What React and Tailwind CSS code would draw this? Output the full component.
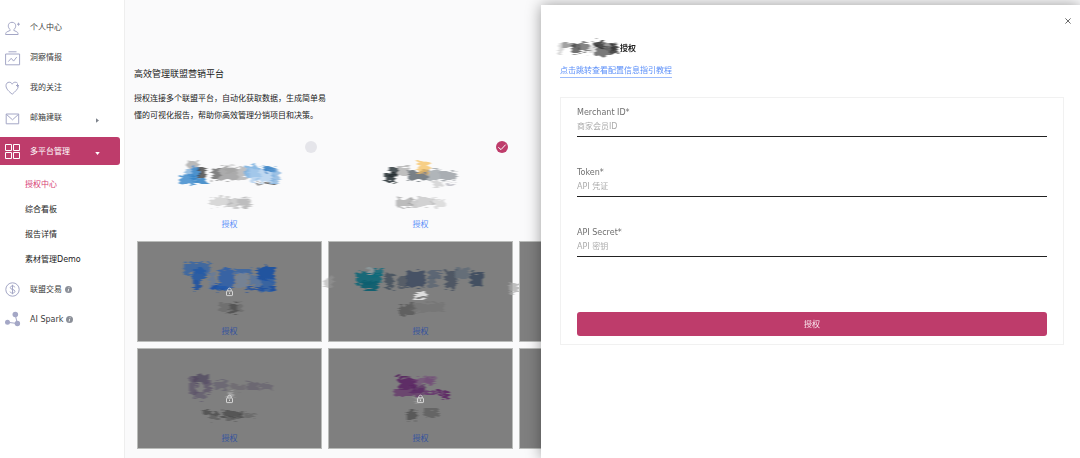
import React from "react";

const navTop = [
  { label: "个人中心", icon: "user" },
  { label: "洞察情报", icon: "insight" },
  { label: "我的关注", icon: "heart" },
  { label: "邮箱建联", icon: "mail", arrow: true },
];
const subItems = ["授权中心", "综合看板", "报告详情", "素材管理Demo"];
const navBottom = [
  { label: "联盟交易", icon: "dollar" },
  { label: "AI Spark", icon: "spark" },
];

function NavIcon({ name }) {
  const shapes = {
    user: (
      <>
        <path d="M5.2 8.6C3.7 7.6 3.3 6 3.3 4.8 3.3 2.600 4.900 1.300 7 1.300s3.700 1.300 3.700 3.500c0 1.200-.4 2.800-1.900 3.800v.8l3 1.400c.9.5 1.300 1.200 1.300 2.700H.6c0-1.500.5-2.200 1.500-2.700l3.100-1.400z" />
        <path d="M13.500 1.700v3M12 3.200h3" />
      </>
    ),
    insight: (
      <>
        <path d="M3.500 .8h8M.6 3h14v10.800H.6z" />
        <path d="M3.300 10.600 6.200 7.300l2.400 2.800 3.100-4" />
      </>
    ),
    heart: (
      <>
        <path d="M13.400 5.300c-.3 2.700-3.400 5.500-6.200 7.900C4.200 10.700 1 8 1 4.700 1 2.600 2.400 1.200 4.200 1.200c1.300 0 2.400.7 3 2 .6-1.300 1.700-2 3-2 1.100 0 2 .5 2.500 1.200" />
        <path d="M12.500 3v3M11 4.500h3" />
      </>
    ),
    mail: (
      <>
        <path d="M1.200 3h12.500v9.800H1.200z" />
        <path d="m1.200 3.200 6.300 5.600 6.200-5.600" />
      </>
    ),
    grid: <path d="M.5.5h6v6h-6zM8.500.5h6v6h-6zM.5 8.500h6v6h-6zM8.500 8.500h6v6h-6z" />,
    dollar: (
      <>
        <circle cx="7.500" cy="7.500" r="6.700" />
        <path d="M7.500 2.800v9.400M9.800 5.300C9.600 4.400 8.700 4 7.500 4S5.300 4.500 5.300 5.600c0 2.500 4.600 1.200 4.600 3.800 0 1.100-1.100 1.700-2.400 1.700s-2.300-.5-2.500-1.500" />
      </>
    ),
    spark: (
      <>
        <path d="m10.300 3 2 8.500-9.500-1.200" />
        <g fill="currentColor" stroke="none">
          <circle cx="10.300" cy="2.500" r="2.800" />
          <circle cx="12.400" cy="11.500" r="2.700" />
          <circle cx="2.500" cy="10.200" r="2.500" />
        </g>
      </>
    ),
  };
  return (
    <svg viewBox="0 0 15 15" fill="none" stroke="currentColor" strokeWidth="1" className="size-[15px] shrink-0 overflow-visible" aria-hidden="true">
      {shapes[name]}
    </svg>
  );
}

function InfoDot() {
  return (
    <svg viewBox="0 0 8 8" className="-ml-[7px] size-[7px] shrink-0" aria-hidden="true">
      <circle cx="4" cy="4" r="4" fill="#8b8f98" />
      <path d="M4.600 1.500v.9M4.200 3.300 3.600 6.300" stroke="#fff" strokeWidth="1" />
    </svg>
  );
}

function Sidebar() {
  const row = "flex h-[30px] items-center gap-2.5 pl-[5px] text-[#a4a7c6]";
  return (
    <nav className="w-[125px] shrink-0 border-r border-[#eeeeee] bg-white pt-[13px]">
      {navTop.map((item) => (
        <a key={item.label} href="#" className={row}>
          <NavIcon name={item.icon} />
          <span className="text-[#3c3c3c]">{item.label}</span>
          {item.arrow && (
            <svg viewBox="0 0 4 6" className="mt-1 mr-[25px] ml-auto h-[5px] w-[3px]" aria-hidden="true">
              <path d="M0 0l4 3-4 3z" fill="#7d838c" />
            </svg>
          )}
        </a>
      ))}
      <a href="#" className="mt-1 mr-1 flex h-7 items-center gap-2.5 rounded-r-[3px] bg-[#be3c6b] pl-[5px] text-white">
        <NavIcon name="grid" />
        <span className="pt-0.5">多平台管理</span>
        <svg viewBox="0 0 6 4" className="mt-1 mr-5 ml-auto h-[3px] w-[5px]" aria-hidden="true">
          <path d="M0 0h6L3 4z" fill="#fff" />
        </svg>
      </a>
      <div className="pt-[7px] pb-0.5">
        {subItems.map((label, i) => (
          <a key={label} href="#" className={"flex h-[25px] items-center pl-[25px] " + (i === 0 ? "text-[#d63d75]" : "text-[#1c1c1c]")}>
            {label}
          </a>
        ))}
      </div>
      {navBottom.map((item) => (
        <a key={item.label} href="#" className={row}>
          <NavIcon name={item.icon} />
          <span className="pt-0.5 text-[#3c3c3c]">{item.label}</span>
          <InfoDot />
        </a>
      ))}
    </nav>
  );
}

/* Each stroke: [x, y, width, height, colour, opacity] */
const cards = [
  {
    id: "a",
    strokes: [
      [50, 26, 11, 9, "#777", 0.5], [49, 34, 13, 10, "#7fb0dc", 0.8], [43, 41, 15, 9, "#3f8ccc", 0.85],
      [55, 34, 7, 13, "#2e7fc4", 0.7], [61, 33, 8, 11, "#333", 0.75], [58, 46, 11, 4, "#3b87c8", 0.9],
      [75, 34, 8, 12, "#444", 0.65], [83, 34, 18, 12, "#777", 0.6], [88, 31, 10, 9, "#999", 0.3], [101, 33, 8, 12, "#666", 0.4],
      [108, 32, 15, 12, "#5e9fda", 0.7], [113, 35, 24, 13, "#a9cbec", 0.75], [127, 32, 12, 6, "#2778c0", 0.8],
      [134, 35, 8, 14, "#6ca5d8", 0.65], [118, 49, 22, 1, "#333", 0.7],
      [73, 63, 20, 9, "#888", 0.3], [92, 65, 22, 9, "#888", 0.38], [100, 63, 13, 10, "#777", 0.2],
    ],
  },
  {
    id: "b",
    checked: true,
    strokes: [
      [57, 39, 10, 9, "#222a30", 0.85], [61, 33, 9, 9, "#222a30", 0.8], [70, 32, 11, 9, "#777", 0.45],
      [80, 36, 20, 10, "#444d55", 0.7], [90, 27, 11, 13, "#f5c060", 0.75], [100, 35, 12, 11, "#667078", 0.5],
      [112, 37, 16, 9, "#5a646c", 0.5], [105, 48, 11, 4, "#999", 0.35], [118, 49, 9, 2, "#778", 0.4],
      [69, 64, 15, 9, "#666", 0.42], [82, 66, 8, 8, "#777", 0.35], [90, 63, 15, 9, "#888", 0.35], [103, 65, 14, 8, "#888", 0.25],
    ],
  },
  { id: "c", strokes: [] },
  {
    id: "d",
    locked: true,
    strokes: [
      [47, 22, 26, 11, "#2f62a8", 0.75], [56, 28, 13, 11, "#1e58a8", 0.85], [57, 39, 6, 10, "#174fa5", 0.85],
      [72, 31, 6, 17, "#5578aa", 0.5], [75, 44, 14, 5, "#174fa5", 0.9], [82, 28, 15, 20, "#245dad", 0.8],
      [98, 27, 17, 6, "#285fac", 0.7], [99, 32, 12, 15, "#6886af", 0.45], [113, 34, 10, 11, "#4370ae", 0.6],
      [120, 25, 17, 14, "#1750a2", 0.9], [123, 38, 15, 13, "#245bab", 0.75], [108, 46, 30, 3, "#1c50a0", 0.85],
      [82, 62, 23, 9, "#555", 0.35], [93, 62, 7, 10, "#3a3a3a", 0.5],
    ],
  },
  {
    id: "e",
    locked: true,
    hideLock: true,
    strokes: [
      [28, 31, 25, 12, "#096678", 0.9], [33, 40, 17, 9, "#075f70", 0.95], [41, 27, 14, 10, "#116c7c", 0.8],
      [40, 27, 5, 6, "#8a9598", 1],
      [58, 32, 7, 16, "#334252", 0.65], [70, 36, 9, 11, "#3a4858", 0.6], [78, 30, 19, 16, "#2d4058", 0.7],
      [100, 29, 13, 9, "#45566c", 0.6], [100, 36, 8, 11, "#45566c", 0.5], [118, 30, 10, 18, "#344256", 0.65],
      [127, 28, 14, 10, "#4c5d72", 0.5], [142, 31, 13, 14, "#273c55", 0.7],
      [87, 51, 11, 6, "#eee", 0.85], [72, 63, 14, 11, "#444", 0.5], [84, 62, 32, 9, "#666", 0.35],
      [-4, 37, 9, 10, "#999", 0.5], [182, 42, 9, 10, "#aaa", 0.75],
    ],
  },
  { id: "f", locked: true, strokes: [] },
  {
    id: "g",
    locked: true,
    strokes: [
      [52, 29, 8, 17, "#5b5169", 0.7], [56, 27, 16, 8, "#50455f", 0.75], [67, 32, 7, 13, "#5b5169", 0.7],
      [56, 43, 12, 8, "#5b5169", 0.6], [77, 33, 14, 9, "#605b6c", 0.6], [93, 36, 16, 6, "#615b6a", 0.5],
      [110, 34, 12, 8, "#5d5868", 0.55], [123, 36, 12, 5, "#5d5868", 0.5], [90, 44, 7, 5, "#ddd", 0.4],
      [66, 63, 15, 4, "#333", 0.55], [73, 67, 8, 5, "#444", 0.45], [85, 63, 21, 6, "#333", 0.55], [90, 68, 12, 4, "#444", 0.45], [108, 65, 11, 5, "#555", 0.45],
    ],
  },
  {
    id: "h",
    locked: true,
    strokes: [
      [67, 27, 13, 2, "#541d5c", 0.85], [71, 30, 17, 12, "#582060", 0.85], [66, 41, 30, 7, "#632d69", 0.7],
      [86, 30, 19, 6, "#704277", 0.6], [97, 27, 11, 8, "#704777", 0.5], [84, 37, 12, 8, "#5a2762", 0.7],
      [97, 43, 11, 5, "#60256a", 0.7], [109, 41, 5, 7, "#571960", 0.8], [115, 43, 5, 8, "#571960", 0.8],
      [87, 49, 6, 6, "#bbb", 0.35], [79, 63, 10, 9, "#3a3a3a", 0.55], [96, 61, 15, 8, "#444", 0.45],
    ],
  },
  { id: "i", locked: true, strokes: [] },
];

function BrushFilter() {
  return (
    <filter id="brush" x="-20%" y="-20%" width="140%" height="140%">
      <feTurbulence type="fractalNoise" baseFrequency="0.15 0.45" numOctaves="3" seed="7" result="n" />
      <feDisplacementMap in="SourceGraphic" in2="n" scale="9" xChannelSelector="R" yChannelSelector="G" />
      <feGaussianBlur stdDeviation="1.1 0.6" />
    </filter>
  );
}

function Strokes({ strokes }) {
  return (
    <g filter="url(#brush)">
      {strokes.map(([x, y, w, h, fill, opacity], i) => (
        <rect key={i} x={x} y={y} width={w} height={h} fill={fill} opacity={opacity} />
      ))}
    </g>
  );
}

function Card({ card }) {
  return (
    <article className={"relative flex h-[101px] flex-col items-center border " + (card.locked ? "border-[#b9bbb9] bg-[#7f7f7f]" : "border-transparent")}>
      <svg viewBox="1 1 183 84" className="h-[84px] w-full shrink-0 overflow-visible" aria-hidden="true">
        {card.strokes.length > 0 && <Strokes strokes={card.strokes} />}
        {card.locked && !card.hideLock && (
          <g fill="none" stroke="#dedede" strokeWidth="0.9">
            <rect x="89.500" y="50" width="6" height="4.600" rx="0.600" />
            <path d="M90.800 50v-1.300c0-2 3.400-2 3.400 0V50M92.500 51.500v1.500" />
          </g>
        )}
      </svg>
      <a href="#" className={"leading-3 " + (card.locked ? "text-[#3453a0]" : "text-[#5b8ff9]")}>授权</a>
      {!card.locked && (
        <label className="absolute top-[6px] right-1 size-3">
          <input
            type="checkbox"
            aria-label="选择平台"
            defaultChecked={card.checked}
            className="peer block size-3 appearance-none rounded-full bg-[#e5e5ea] checked:bg-[#be3c6b]"
          />
          <svg viewBox="0 0 12 12" className="pointer-events-none absolute inset-0 hidden size-3 peer-checked:block" aria-hidden="true">
            <path d="M2.300 6.300 5 8.600l4.700-5" fill="none" stroke="#fff" strokeWidth="1" />
          </svg>
        </label>
      )}
    </article>
  );
}

const fields = [
  { id: "merchant", label: "Merchant ID*", placeholder: "商家会员ID" },
  { id: "token", label: "Token*", placeholder: "API 凭证" },
  { id: "secret", label: "API Secret*", placeholder: "API 密钥" },
];

function Drawer() {
  return (
    <aside className="fixed top-[5px] right-0 bottom-0 w-[calc(50%-1px)] bg-white px-4 pl-[19px] shadow-[0_0_14px_rgba(0,0,0,0.38)]">
      <div className="-mr-2 flex h-8 items-center justify-end">
        <button type="button" aria-label="关闭" className="flex size-2 items-center justify-center">
          <svg viewBox="0 0 6 6" className="size-[6px]" aria-hidden="true">
            <path d="M.4.4l5.200 5.200M5.600.4.4 5.600" stroke="#444" strokeWidth="0.8" />
          </svg>
        </button>
      </div>
      <h2 className="flex h-6 items-center gap-0.5 text-[8px] font-bold text-[#222]">
        <svg viewBox="0 0 58 24" className="h-6 w-[58px] overflow-visible" aria-hidden="true">
          <Strokes
            strokes={[
              [-2, 6, 5, 12, "#999", 0.35], [3, 5, 12, 6, "#555", 0.55], [12, 7, 8, 10, "#333", 0.7], [19, 6, 10, 9, "#444", 0.65],
              [28, 8, 7, 8, "#999", 0.3], [34, 4, 9, 8, "#222", 0.8], [36, 10, 14, 9, "#333", 0.65], [43, 5, 12, 8, "#555", 0.6],
              [50, 8, 8, 9, "#222", 0.8],
            ]}
          />
        </svg>
        <span>授权</span>
      </h2>
      <a href="#" className="mt-1 inline-block h-[13px] border-b border-[#9dbcfb] leading-3 text-[#5b8ff9]">
        点击跳转查看配置信息指引教程
      </a>
      <form className="mt-[18px] border border-[#f1f1f1] px-4 pt-2 pb-2" onSubmit={(e) => e.preventDefault()}>
        <div className="flex flex-col gap-[29px]">
          {fields.map((f) => (
            <div key={f.id} className="flex flex-col border-b border-[#222222] pb-0.5">
              <label htmlFor={f.id} className="h-[14px] leading-[14px] text-[#6f6f6f]">{f.label}</label>
              <input id={f.id} type="text" placeholder={f.placeholder} className="h-[14px] w-full p-0 leading-[14px] outline-none placeholder:text-[#ababab]" />
            </div>
          ))}
        </div>
        <button type="submit" className="mt-[55px] flex h-6 w-full items-center justify-center rounded-[3px] bg-[#be3c6b] pt-0.5 text-[#fbe9f0]">
          授权
        </button>
      </form>
    </aside>
  );
}

export default function App() {
  return (
    <div className="flex min-h-screen overflow-hidden bg-[#fafafb] font-['DejaVu_Sans','Noto_Sans_CJK_SC',sans-serif] text-[8px] leading-4">
      <svg className="absolute size-0" aria-hidden="true">
        <defs>
          <BrushFilter />
        </defs>
      </svg>
      <Sidebar />
      <main className="min-w-0 flex-1 overflow-hidden pt-[66px] pb-2 pl-[9px] text-[#222]">
        <h1 className="text-[9px] leading-4">高效管理联盟营销平台</h1>
        <p className="mt-2 leading-[17px]">
          授权连接多个联盟平台，自动化获取数据，生成简单易
          <br />
          懂的可视化报告，帮助你高效管理分销项目和决策。
        </p>
        <section className="mt-[10px] ml-[3px] grid grid-cols-[repeat(3,185px)] gap-[6px]">
          {cards.map((card) => (
            <Card key={card.id} card={card} />
          ))}
        </section>
      </main>
      <Drawer />
    </div>
  );
}
